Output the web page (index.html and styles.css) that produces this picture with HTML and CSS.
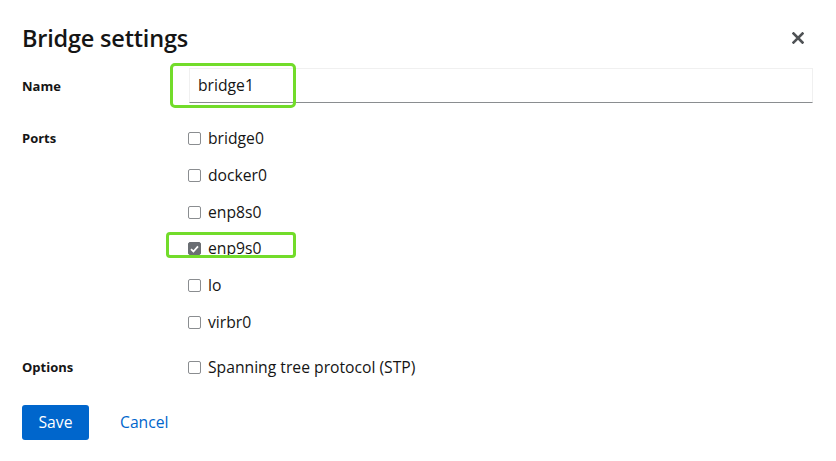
FILE: index.html
```html
<!DOCTYPE html>
<html>
<head>
<meta charset="utf-8">
<link rel="stylesheet" href="styles.css">
</head>
<body>
<div class="modal">
  <header class="head">
    <h1 class="title">Bridge settings</h1>
    <button class="close" aria-label="Close">
      <svg width="12" height="12" viewBox="0 0 12 12"><path d="M1.5 1.5 L10.5 10.5 M10.5 1.5 L1.5 10.5" stroke="#4f5255" stroke-width="2.6" stroke-linecap="square"/></svg>
    </button>
  </header>
  <form class="form">
    <div class="label name-label">Name</div>
    <div class="field name-field">
      <div class="input"><span class="hl hl-input"></span><span class="val">bridge1</span></div>
    </div>

    <div class="label ports-label">Ports</div>
    <div class="field ports">
      <label class="check"><span class="box"></span>bridge0</label>
      <label class="check"><span class="box"></span>docker0</label>
      <label class="check"><span class="box"></span>enp8s0</label>
      <label class="check"><span class="hl hl-check"></span><span class="box checked"><svg width="9" height="8" viewBox="0 0 9 8"><path d="M1 4.2 L3.4 6.5 L8 1.3" stroke="#fff" stroke-width="1.8" fill="none"/></svg></span>enp9s0</label>
      <label class="check"><span class="box"></span>lo</label>
      <label class="check"><span class="box"></span>virbr0</label>
    </div>

    <div class="label opt-label">Options</div>
    <div class="field opts">
      <label class="check"><span class="box"></span>Spanning tree protocol (STP)</label>
    </div>
  </form>
  <footer class="actions">
    <button class="btn primary">Save</button>
    <button class="btn link">Cancel</button>
  </footer>
</div>
</body>
</html>
```
FILE: styles.css
```css
* { box-sizing: border-box; }
html, body { margin: 0; background: #fff; }
body {
  font-family: "Open Sans", "Liberation Sans", sans-serif;
  color: #151515;
  width: 836px;
  height: 461px;
  overflow: hidden;
}
.modal { padding: 22px 23px 0 22px; }
.head {
  display: flex;
  align-items: center;
  justify-content: space-between;
  height: 32px;
}
.title {
  margin: 0;
  font-family: "Open Sans", sans-serif;
  font-size: 23.5px;
  font-weight: 600;
  letter-spacing: -0.2px;
  line-height: 32px;
}
.close {
  border: 0; background: none; padding: 0;
  width: 12px; height: 12px;
  margin-right: 9px;
  display: flex;
}
.form {
  display: grid;
  grid-template-columns: 167px 1fr;
  margin-top: 14px;
}
.label {
  font-size: 13px;
  font-weight: 700;
  line-height: 18px;
}
.name-label { padding-top: 9px; }
.input {
  position: relative;
  height: 35px;
  border: 1px solid #f0f0f0;
  border-bottom: 1px solid #8a8d90;
  padding-left: 8px;
  font-size: 15.7px;
  line-height: 33px;
}
.hl {
  position: absolute;
  border: 3px solid #72dc2a;
  border-radius: 5px;
}
.hl-input { left: -20px; top: -6px; width: 126px; height: 45px; }
.ports-label { margin-top: 26px; }
.ports { margin-top: 26px; display: flex; flex-direction: column; gap: 17.8px; }
.check {
  position: relative;
  display: flex;
  align-items: center;
  gap: 7px;
  font-size: 15.7px;
  line-height: 19px;
  height: 19px;
}
.box {
  width: 13px; height: 13px;
  border: 1px solid #8a8d90;
  border-radius: 2px;
  display: flex;
  align-items: center;
  justify-content: center;
  flex: none;
  margin-left: -1px;
}
.box.checked { background: #6a6e73; border-color: #6a6e73; }
.hl-check { left: -23px; top: -7px; width: 130px; height: 26px; border-radius: 4px; }
.opt-label { margin-top: 26px; }
.opts { margin-top: 26px; }
.actions {
  display: flex;
  align-items: center;
  gap: 15px;
  margin-top: 28px;
}
.btn {
  font-family: "Open Sans", "Liberation Sans", sans-serif;
  font-size: 15.7px;
  border: 0;
  padding: 0 16px;
  height: 35px;
  border-radius: 3px;
  background: none;
}
.primary { background: #0066cc; color: #fff; width: 67px; }
.link { color: #0066cc; }
```
